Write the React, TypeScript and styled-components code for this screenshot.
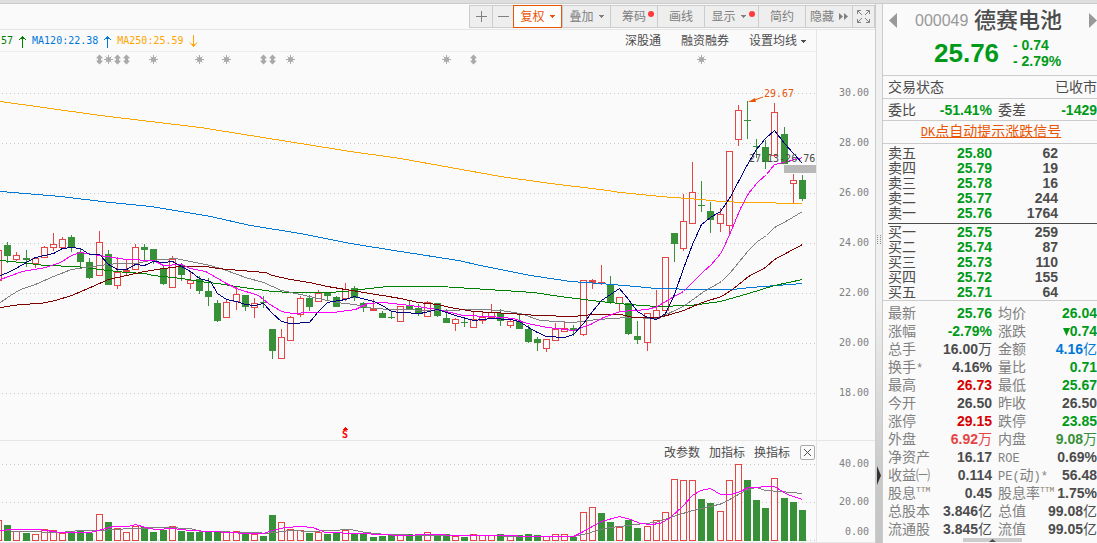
import React from "react";
import styled, { createGlobalStyle } from "styled-components";

const C = {
  up: "#e54545",
  down: "#389038",
  green: "#009a18",
  red: "#d80000",
  orange: "#ea5504",
  blue: "#0078d7",
  text: "#4c4c4c",
  muted: "#808080",
  line: "#cccccc",
  soft: "#e6e6e6",
  bg: "#fafafa",
};

const CJK = '"Liberation Sans", "Noto Sans CJK SC", sans-serif';
const MONO = '"DejaVu Sans Mono", "Noto Sans CJK SC", monospace';

const GlobalStyle = createGlobalStyle`
  *, *::before, *::after { box-sizing: border-box; }
  body { margin: 0; background: ${C.bg}; font-family: ${CJK}; color: ${C.text}; }
  button { font: inherit; color: inherit; background: none; border: 0; padding: 0; cursor: pointer; }
  table { border-spacing: 0; }
  th { font-weight: 400; text-align: left; padding: 0; }
  td { padding: 0; }
  svg { display: block; }
`;

/* ---------- page ---------- */

const Page = styled.div`
  display: flex;
  min-height: 100vh;
  border-top: 3px solid #dedede;
  overflow: hidden;
`;

const ChartArea = styled.main`
  flex: 1;
  min-width: 0;
  display: flex;
  flex-direction: column;
  border-top: 1px solid ${C.line};
  border-right: 1px solid ${C.line};
`;

const Gutter = styled.div`
  width: 6px;
  flex: none;
  display: flex;
  flex-direction: column;
  justify-content: space-between;
  padding: 231px 0 58px;
  border-top: 1px solid ${C.line};
  background: linear-gradient(#f0f0f0 55%, #c9c9c9 88%, #c4c4c4);
`;

const Panel = styled.aside`
  width: 215px;
  flex: none;
  display: flex;
  flex-direction: column;
  border-top: 1px solid ${C.line};
  border-left: 1px solid ${C.line};
`;

/* ---------- toolbar ---------- */

const Toolbar = styled.div`
  display: flex;
  justify-content: flex-end;
  height: 26px;
  padding-top: 1px;
  border-bottom: 1px solid ${C.soft};
`;

const ToolButton = styled.button<{ $width: number; $active?: boolean; $badge?: boolean }>`
  position: relative;
  display: flex;
  align-items: center;
  justify-content: center;
  gap: 5px;
  width: ${(p) => p.$width}px;
  height: 23px;
  padding-right: ${(p) => (p.$badge ? 6 : 0)}px;
  font-size: 12px;
  line-height: 20px;
  color: ${(p) => (p.$active ? C.orange : C.muted)};
  background: ${(p) => (p.$active ? "#ffffff" : "#eeeeee")};
  border: 1px solid ${(p) => (p.$active ? C.orange : C.line)};
  border-right-width: ${(p) => (p.$active ? 1 : 0)}px;
  white-space: nowrap;

  &:last-child { border-right-width: 1px; }
`;

const Dot = styled.span`
  position: absolute;
  top: 5px;
  right: 3px;
  width: 6px;
  height: 6px;
  border-radius: 50%;
  background: #ff3b3b;
`;

const Caret = () => (
  <svg width="5" height="3" viewBox="0 0 5 3" shapeRendering="crispEdges" aria-hidden="true">
    <path d="M0 0h5v1h-1v1h-1v1h-1v-1h-1v-1h-1z" fill="currentColor" />
  </svg>
);

/* ---------- panes ---------- */

const Pane = styled.section`
  display: flex;
  border-bottom: 1px solid ${C.soft};
`;

const Plot = styled.div`
  flex: 1;
  min-width: 0;
  overflow: hidden;
  display: flex;
  flex-direction: column;
  align-items: flex-end;
`;

const Axis = styled.ol`
  list-style: none;
  margin: 0;
  width: 59px;
  flex: none;
  display: flex;
  flex-direction: column;
  border-left: 1px solid ${C.soft};
  font: 10px/12px ${MONO};
  color: ${C.muted};
  padding: 0 6px 0 0;
`;

const Tick = styled.li<{ $height: number }>`
  height: ${(p) => p.$height}px;
  display: flex;
  align-items: center;
  justify-content: flex-end;
`;

const PriceAxis = styled(Axis)`
  padding-top: 38px;
`;

const VolumeAxis = styled(Axis)`
  padding-top: 4px;
`;

const InfoBar = styled.div`
  width: 100%;
  height: 22px;
  display: flex;
  align-items: center;
  justify-content: space-between;
  padding: 1px 10px 0 1px;
  border-bottom: 1px solid #eeeeee;
`;

const Averages = styled.div`
  display: flex;
  align-items: center;
  font: 10px/14px ${MONO};
`;

const Average = styled.span<{ $color: string }>`
  display: flex;
  align-items: center;
  gap: 5px;
  margin-right: 5px;
  color: ${(p) => p.$color};
`;

const Links = styled.div<{ $gap: number }>`
  display: flex;
  align-items: center;
  gap: ${(p) => p.$gap}px;
  font-size: 12px;
  line-height: 16px;
`;

const LinkButton = styled.button`
  display: flex;
  align-items: center;
  gap: 4px;
  white-space: nowrap;
`;

const VolumeTools = styled.div`
  height: 23px;
  display: flex;
  align-items: center;
  gap: 10px;
  padding-right: 1px;
`;

const CloseButton = styled.button`
  width: 15px;
  height: 15px;
  display: flex;
  align-items: center;
  justify-content: center;
  border: 1px solid #aaaaaa;
  border-radius: 2px;
`;

const Svg = styled.svg`
  flex: none;
  overflow: visible;
  font: 10px ${MONO};
`;

/* ---------- chart data: x, colour, high, top, bottom, low, volume top, volume colour ---------- */

const CANDLES = `
-2 r 250 250 281 281 520 r|7 g 242 245 256 263 525 g|16 r 252 255 260 261 531 r|26 g 250 258 260 267 533 g
35 r 257 258 264 268 534 r|44 r 246 247 258 258 529 r|53 r 233 244 248 251 530 r|62 r 237 239 248 249 533 r
71 g 235 237 248 252 533 g|80 g 249 252 262 267 531 g|89 g 258 262 278 279 533 g|99 r 231 242 276 276 514 r
108 g 250 254 285 285 522 g|117 r 257 272 286 289 528 r|126 r 260 270 273 276 532 r|135 r 244 247 270 270 526 r
144 g 244 247 250 260 527 g|153 g 249 249 261 264 532 g|163 g 266 268 284 285 530 g|172 r 256 259 288 288 526 r
181 g 263 265 275 281 531 g|190 r 271 280 284 289 532 g|199 g 276 279 291 294 532 g|208 g 278 291 297 306 531 g
217 g 300 303 321 322 531 g|226 r 299 302 318 318 532 r|236 r 287 294 302 310 531 r|245 g 295 295 307 311 534 g
254 r 298 303 308 318 534 r|263 g 296 302 303 308 536 g|272 g 329 329 351 359 515 g|281 r 329 337 359 359 522 r
290 r 316 317 341 341 529 r|300 r 296 298 315 317 530 r|309 g 295 298 307 311 533 g|318 r 290 293 302 302 532 r
327 g 292 292 296 300 534 g|336 g 296 297 307 307 533 g|345 r 283 289 299 301 530 r|354 g 286 288 298 301 533 g
363 g 302 303 308 312 534 g|373 r 299 308 311 311 537 g|382 g 311 313 318 318 536 g|391 g 311 317 318 319 534 g
400 r 306 306 322 322 535 r|409 g 301 305 309 309 534 g|418 g 304 308 314 316 534 g|427 r 301 302 317 317 532 r
437 g 303 303 316 317 534 g|446 g 309 318 323 323 534 g|455 r 318 319 324 331 536 r|464 g 318 322 323 327 537 g
473 r 312 319 328 328 534 r|482 r 312 317 321 324 535 r|491 r 304 312 318 318 535 r|500 g 309 313 321 326 534 g
510 r 320 321 326 328 535 r|519 g 315 321 329 329 535 g|528 g 325 329 342 343 534 g|537 g 337 339 343 351 535 g
546 r 339 339 349 352 536 r|555 r 323 329 341 341 534 r|564 r 321 328 332 332 534 r|573 g 325 328 331 336 537 g
583 r 280 280 335 336 512 r|592 r 279 280 283 289 507 r|601 r 265 282 284 285 513 g|610 g 276 285 303 304 522 g
619 r 297 297 304 312 527 r|628 g 303 303 334 335 520 g|637 g 321 336 340 344 528 g|647 r 313 313 343 351 526 r
656 r 290 310 319 319 520 r|665 r 257 257 311 311 512 r|674 g 233 233 244 262 479 r|683 r 194 221 249 251 480 r
692 r 162 192 224 224 480 r|701 g 181 205 206 212 499 g|710 g 202 211 220 233 503 g|720 r 208 214 224 232 511 r
729 r 151 151 226 233 480 r|738 r 105 110 140 146 464 r|747 g 101 120 121 139 480 g|756 g 139 146 147 158 500 g
765 g 140 147 162 169 508 g|774 r 103 112 156 157 478 r|784 g 127 134 164 164 498 g|793 r 174 180 184 203 502 g
802 g 175 180 199 201 510 g`
  .trim()
  .split(/[|\n]/)
  .map((row) => {
    const [x, color, hi, top, bottom, lo, volume, volumeColor] = row.split(" ");
    return { x: +x, color, hi: +hi, top: +top, bottom: +bottom, lo: +lo, volume: +volume, volumeColor };
  });

const PRICE_LINES: [string, string][] = [
  ["#ffa500", "0,101 50,108 100,115 150,121 200,127 250,135 300,143 350,151 400,158 450,167 500,176 550,183 600,189 620,192 660,196 700,199 720,201 747,202 802,203"],
  ["#0078d7", "0,191 60,196 110,202 150,206 210,216 250,225 300,233 350,243 400,251 458,260 480,265 500,269 530,275 570,281 600,283 635,286 656,288 700,289 732,289 750,287 802,283"],
  ["#008000", "0,260 20,262 45,265 75,266 99,269 126,272 144,273 153,275 181,278 199,281 217,283 236,286 250,288 272,291 290,292 327,292 345,291 360,289 387,286 440,286 487,289 533,292 560,296 583,299 600,301 628,304 656,306 690,305 720,301 748,293 774,285 802,279"],
  ["#808080", "0,302 10,295 20,289 35,284 53,276 71,269 85,267 99,265 117,263 135,263 150,260 175,258 190,261 210,265 226,270 245,277 263,282 281,290 300,294 318,298 336,302 354,304 373,308 391,309 437,310 482,309 500,310 520,313 540,320 573,322 597,319 627,317 657,318 670,312 683,306 702,292 721,281 730,272 748,250 757,241 766,235 774,227 787,220 802,211"],
  ["#800000", "0,307 20,304 40,303 55,300 71,295 90,287 108,279 126,275 144,271 163,268 180,266 205,266 217,268 240,270 265,272 272,275 290,279 309,282 327,286 345,289 363,292 382,295 400,298 418,302 437,304 450,307 473,311 491,312 510,313 537,315 573,316 593,314 620,314 633,317 658,317 670,314 683,310 702,302 721,296 732,289 748,276 765,267 774,259 787,252 802,244"],
  ["#ff00ff", "0,279 22,271 45,267 60,262 71,255 80,252 99,255 126,259 153,260 163,265 181,264 190,268 205,271 214,276 226,283 236,288 258,295 268,303 281,311 292,313 310,312 333,312 355,309 367,303 383,302 410,305 437,309 450,312 463,315 490,316 513,318 527,323 547,327 573,330 590,324 603,317 620,311 647,309 657,306 670,298 683,291 702,272 711,264 721,252 730,232 740,208 748,193 757,182 766,174 774,164 783,162 802,157"],
  ["#000080", "0,275 10,271 26,262 35,257 53,253 62,248 71,247 80,248 89,254 99,254 108,264 117,269 126,269 135,264 144,265 153,261 163,262 172,261 181,266 190,271 199,278 210,281 217,293 226,299 236,301 245,304 254,305 263,303 272,313 281,321 290,323 309,322 318,311 327,302 345,299 354,296 373,301 382,305 391,311 400,312 420,313 437,309 455,315 473,320 491,318 510,319 519,321 528,327 537,332 546,336 564,337 573,334 583,323 592,311 601,300 610,294 619,288 628,299 637,311 647,317 656,319 665,313 674,294 683,268 692,244 701,224 710,217 720,211 729,198 738,181 747,164 756,149 765,138 774,130 784,143 793,153 802,163"],
];

const VOLUME_LINES: [string, string][] = [
  ["#808080", "0,530 20,531 60,532 80,530 100,530 130,528 165,527 190,528 200,531 258,532 265,533 290,530 310,531 350,529 365,532 385,534 430,535 573,536 587,533 600,529 610,527 620,526 635,524 655,522 673,516 692,510 710,506 722,503 738,494 747,489 756,487 765,490 780,491 802,493"],
  ["#ff00ff", "0,530 12,529 38,529 60,532 90,532 105,528 113,526 128,526 135,524 145,527 155,529 172,528 190,530 210,531 230,532 245,533 263,533 272,530 285,527 300,526 312,527 325,532 360,533 400,535 430,534 460,535 573,536 583,531 592,526 601,521 619,516 630,519 640,523 650,524 660,523 670,517 682,506 692,495 700,490 710,488 720,494 730,494 740,491 748,487 774,486 787,494 802,499"],
];

const STARS = [108, 153, 199, 226, 290, 446, 701];
const DOUBLE_ARROWS = [99, 117, 126, 263, 272, 473];

const fillOf = (c: string) => (c === "r" ? C.up : C.down);

function Body({ x, top, bottom, color }: { x: number; top: number; bottom: number; color: string }) {
  if (color === "g" || bottom - top < 4) {
    return <rect x={x - 3} y={top} width="7" height={bottom - top} fill={fillOf(color)} />;
  }
  return <rect x={x - 2.5} y={top + 0.5} width="6" height={bottom - top - 1} fill={C.bg} stroke={C.up} />;
}

function GridLine({ y }: { y: number }) {
  return <path d={`M-1998 ${y + 0.5}H816`} stroke="#c8c8c8" strokeDasharray="1 3" />;
}

function Lines({ lines }: { lines: [string, string][] }) {
  return (
    <g fill="none" transform="translate(0.5 0.5)">
      {lines.map(([color, points]) => (
        <polyline key={color} points={points} stroke={color} />
      ))}
    </g>
  );
}

function PriceChart() {
  return (
    <Svg width="816" height="388" viewBox="0 52 816 388" shapeRendering="crispEdges" role="img" aria-label="K线图">
      {[93, 143, 193, 243, 293, 343, 393].map((y) => (
        <GridLine key={y} y={y} />
      ))}
      {CANDLES.map((c) => (
        <g key={c.x}>
          <rect x={c.x} y={c.hi} width="1" height={c.top - c.hi} fill={fillOf(c.color)} />
          <rect x={c.x} y={c.bottom} width="1" height={c.lo - c.bottom} fill={fillOf(c.color)} />
          <Body x={c.x} top={c.top} bottom={c.bottom} color={c.color} />
        </g>
      ))}
      <rect x="784" y="165" width="32" height="8" fill="#b8b8b8" />
      <Lines lines={PRICE_LINES} />
      <text x="749" y="162" fill={C.text}>27.13-26.76</text>
      <text x="764" y="97" fill={C.orange}>29.67</text>
      <g stroke={C.orange} fill={C.orange} shapeRendering="auto">
        <path d="M763 97L752 101" />
        <path d="M748 102L755 98L756 102Z" stroke="none" />
      </g>
      <g fill="#aaaaaa" stroke="#aaaaaa" shapeRendering="auto">
        {STARS.map((x) => (
          <g key={x} transform={`translate(${x + 0.5} 59.5)`}>
            <circle r="2.500" stroke="none" />
            <path d="M0 -4.500V4.500M-4.500 0H4.500M-3 -3L3 3M3 -3L-3 3" />
          </g>
        ))}
        {DOUBLE_ARROWS.map((x) => (
          <path key={x} transform={`translate(${x + 0.5} 59.5)`} stroke="none" d="M0 -5L3 -2V-1H1.500V1H3V2L0 5L-3 2V1H-1.500V-1H-3V-2Z" />
        ))}
      </g>
      <path d="M345 427L349 430H342Z" fill="#ff0000" />
      <text x="345" y="438" fill="#ff0000" fontWeight="700" textAnchor="middle">S</text>
    </Svg>
  );
}

function VolumeChart() {
  return (
    <Svg width="816" height="78" viewBox="0 464 816 78" shapeRendering="crispEdges" role="img" aria-label="成交量">
      {[464, 502, 540].map((y) => (
        <GridLine key={y} y={y} />
      ))}
      {CANDLES.map((c) => (
        <Body key={c.x} x={c.x} top={c.volume} bottom={541} color={c.volumeColor} />
      ))}
      <Lines lines={VOLUME_LINES} />
    </Svg>
  );
}

const Arrow = ({ down }: { down?: boolean }) => (
  <svg width="9" height="13" viewBox="0 0 9 13" fill="none" stroke="currentColor" aria-hidden="true">
    {down ? (
      <path d="M4.500 0V12M1 7.500L4.500 11.500L8 7.500M3 9.500H6" />
    ) : (
      <path d="M4.500 13V1M1 5L4.500 1.500L8 5M3 3.500H6" />
    )}
  </svg>
);

/* ---------- quote panel ---------- */

const Head = styled.header`
  height: 72px;
  border-bottom: 1px solid ${C.line};
`;

const NameRow = styled.div`
  display: flex;
  align-items: center;
  height: 33px;
  padding-left: 5px;
`;

const NavButton = styled.button`
  flex: none;
  width: 9px;
  height: 15px;
`;

const Code = styled.span`
  margin-left: 18px;
  width: 59px;
  font-size: 16px;
  line-height: 20px;
  color: #999999;
`;

const Name = styled.h1`
  margin: 0;
  flex: 1;
  font-size: 22px;
  line-height: 32px;
  font-weight: 500;
  white-space: nowrap;
`;

const PriceRow = styled.div`
  display: flex;
  align-items: center;
  padding-left: 51px;
  height: 32px;
  font-weight: 700;
  color: ${C.green};
`;

const Price = styled.strong`
  width: 79px;
  font-size: 26px;
  line-height: 32px;
`;

const Change = styled.div`
  font-size: 14px;
  line-height: 16px;
  white-space: pre;
`;

const StatusRow = styled.div`
  display: flex;
  align-items: center;
  justify-content: space-between;
  height: 23px;
  padding-left: 5px;
  border-bottom: 1px solid ${C.line};
  font-size: 14px;
  line-height: 20px;
`;

const RatioRow = styled(StatusRow)`
  height: 22px;
`;

const Pair = styled.div<{ $grow?: boolean }>`
  display: flex;
  justify-content: space-between;
  width: ${(p) => (p.$grow ? "auto" : "104px")};
  flex: ${(p) => (p.$grow ? "1" : "none")};
  margin-left: ${(p) => (p.$grow ? 6 : 0)}px;
`;

const Num = styled.b<{ $color?: string }>`
  color: ${(p) => p.$color ?? C.text};
`;

const SignalRow = styled(StatusRow)`
  justify-content: center;
  padding: 0 0 0 2px;
`;

const SignalLink = styled.a`
  color: ${C.orange};
  text-decoration: underline;
`;

const Latin = styled.span`
  font-family: "Liberation Mono", monospace;
  font-size: 12px;
`;

const Book = styled.table`
  width: 100%;
  padding: 2px 0 0 5px;
  border-bottom: 1px solid ${C.line};
  font-size: 14px;
  line-height: 15px;
`;

const BookHalf = styled.tbody<{ $first?: boolean }>`
  display: block;
  padding-bottom: ${(p) => (p.$first ? 2 : 0)}px;
  padding-top: ${(p) => (p.$first ? 0 : 1)}px;
  border-bottom: ${(p) => (p.$first ? `1px solid ${C.text}` : "0")};
`;

const BookRow = styled.tr`
  display: grid;
  grid-template-columns: 44px 60px 66px;
  height: 15px;

  td { text-align: right; font-weight: 700; }
  td:nth-child(2) { color: ${C.green}; }
`;

const Quotes = styled.table`
  width: 100%;
  padding: 3px 0 0 5px;
  font-size: 14px;
  line-height: 18px;

  tbody { display: block; }
`;

const QuoteRow = styled.tr`
  display: grid;
  grid-template-columns: 44px 60px max-content 1fr;
  height: 18px;
  white-space: nowrap;

  th { color: ${C.muted}; }
  th:nth-child(3) { margin-left: 6px; }
`;

const QuoteValue = styled.td<{ $color?: string }>`
  text-align: right;
  font-weight: 700;
  color: ${(p) => p.$color ?? C.text};
`;

const Unit = styled.span`
  font-weight: 400;
`;

const Sup = styled.sup`
  font: 8px/8px "Liberation Mono", monospace;
  color: #8c8070;
  vertical-align: 6px;
`;

const InlineMark = styled.svg`
  display: inline;
`;

const BottomTab = styled.button`
  align-self: flex-start;
  margin-left: 80px;
  width: 59px;
  height: 4px;
  display: flex;
  justify-content: center;
  background: #cccccc;
`;

const SELLS = [["卖五", "25.80", "62"], ["卖四", "25.79", "19"], ["卖三", "25.78", "16"], ["卖二", "25.77", "244"], ["卖一", "25.76", "1764"]];
const BUYS = [["买一", "25.75", "259"], ["买二", "25.74", "87"], ["买三", "25.73", "110"], ["买四", "25.72", "155"], ["买五", "25.71", "64"]];

type Quote = [React.ReactNode, string, string | undefined];
const QUOTES: [Quote, Quote][] = [
  [["最新", "25.76", C.green], ["均价", "26.04", C.green]],
  [["涨幅", "-2.79%", C.green], ["涨跌", "▼0.74", C.green]],
  [["总手", "16.00万", undefined], ["金额", "4.16亿", C.blue]],
  [[<>换手<Latin>*</Latin></>, "4.16%", undefined], ["量比", "0.71", C.green]],
  [["最高", "26.73", C.red], ["最低", "25.67", C.green]],
  [["今开", "26.50", undefined], ["昨收", "26.50", undefined]],
  [["涨停", "29.15", C.red], ["跌停", "23.85", C.green]],
  [["外盘", "6.92万", C.up], ["内盘", "9.08万", C.down]],
  [["净资产", "16.17", undefined], [<Latin>ROE</Latin>, "0.69%", undefined]],
  [["收益㈠", "0.114", undefined], [<><Latin>PE(</Latin>动<Latin>)*</Latin></>, "56.48", undefined]],
  [[<>股息<Sup>TTM</Sup></>, "0.45", undefined], [<>股息率<Sup>TTM</Sup></>, "1.75%", undefined]],
  [["总股本", "3.846亿", undefined], ["总值", "99.08亿", undefined]],
  [["流通股", "3.845亿", undefined], ["流值", "99.05亿", undefined]],
];

function Value({ text }: { text: string }) {
  if (text.startsWith("▼")) {
    return (
      <>
        <InlineMark width="7" height="8" viewBox="0 0 7 8" aria-label="下跌">
          <path d="M0 0H7L3.500 8Z" fill="currentColor" />
        </InlineMark>
        {text.slice(1)}
      </>
    );
  }
  const unit = /[万亿]$/.test(text) ? text.slice(-1) : "";
  return (
    <>
      {unit ? text.slice(0, -1) : text}
      {unit && <Unit>{unit}</Unit>}
    </>
  );
}

function QuotePanel() {
  return (
    <Panel>
      <Head>
        <NameRow>
          <NavButton aria-label="上一只">
            <svg width="9" height="15" viewBox="0 0 9 15"><path d="M9 0V15L1 7.500Z" fill="#999999" /></svg>
          </NavButton>
          <Code>000049</Code>
          <Name>德赛电池</Name>
          <NavButton aria-label="下一只">
            <svg width="9" height="15" viewBox="0 0 9 15"><path d="M1 0V15L9 7.500Z" fill="#999999" /></svg>
          </NavButton>
        </NameRow>
        <PriceRow>
          <Price>25.76</Price>
          <Change>{"- 0.74\n- 2.79%"}</Change>
        </PriceRow>
      </Head>
      <StatusRow>
        <span>交易状态</span>
        <span>已收市</span>
      </StatusRow>
      <RatioRow>
        <Pair><span>委比</span><Num $color={C.green}>-51.41%</Num></Pair>
        <Pair $grow><span>委差</span><Num $color={C.green}>-1429</Num></Pair>
      </RatioRow>
      <SignalRow>
        <SignalLink href="#dk"><Latin>DK</Latin>点自动提示涨跌信号</SignalLink>
      </SignalRow>
      <Book>
        {[SELLS, BUYS].map((rows, i) => (
          <BookHalf key={i} $first={i === 0}>
            {rows.map(([label, price, size]) => (
              <BookRow key={label}>
                <th scope="row">{label}</th>
                <td>{price}</td>
                <td>{size}</td>
              </BookRow>
            ))}
          </BookHalf>
        ))}
      </Book>
      <Quotes>
        <tbody>
          {QUOTES.map(([a, b], i) => (
            <QuoteRow key={i}>
              <th scope="row">{a[0]}</th>
              <QuoteValue $color={a[2]}><Value text={a[1]} /></QuoteValue>
              <th scope="row">{b[0]}</th>
              <QuoteValue $color={b[2]}><Value text={b[1]} /></QuoteValue>
            </QuoteRow>
          ))}
        </tbody>
      </Quotes>
      <BottomTab aria-label="展开">
        <svg width="7" height="4" viewBox="0 0 7 4"><path d="M0 4L3.500 1L7 4Z" fill={C.text} /></svg>
      </BottomTab>
    </Panel>
  );
}

export default function App() {
  return (
    <Page>
      <GlobalStyle />
      <ChartArea>
        <Toolbar>
          <ToolButton $width={23} aria-label="放大">
            <svg width="11" height="11" viewBox="0 0 11 11" stroke="currentColor"><path d="M0 5.500H11M5.500 0V11" /></svg>
          </ToolButton>
          <ToolButton $width={21} aria-label="缩小">
            <svg width="11" height="11" viewBox="0 0 11 11" stroke="currentColor"><path d="M0 5.500H11" /></svg>
          </ToolButton>
          <ToolButton $width={49} $active>复权<Caret /></ToolButton>
          <ToolButton $width={48}>叠加<Caret /></ToolButton>
          <ToolButton $width={47}>筹码<Dot /></ToolButton>
          <ToolButton $width={47}>画线</ToolButton>
          <ToolButton $width={54} $badge>显示<Caret /><Dot /></ToolButton>
          <ToolButton $width={47}>简约</ToolButton>
          <ToolButton $width={47}>
            隐藏
            <svg width="9" height="7" viewBox="0 0 9 7" fill="currentColor" aria-hidden="true"><path d="M0 0L4 3.500L0 7ZM5 0L9 3.500L5 7Z" /></svg>
          </ToolButton>
          <ToolButton $width={23} aria-label="全屏">
            <svg width="13" height="13" viewBox="0 0 13 13" fill="none" stroke="currentColor">
              <path d="M0.500 4V0.500H4M0.500 0.500L5 5M9 0.500H12.500V4M12.500 0.500L8 5M0.500 9V12.500H4M0.500 12.500L5 8M9 12.500H12.500V9M12.500 12.500L8 8" />
            </svg>
          </ToolButton>
        </Toolbar>
        <Pane>
          <Plot>
            <InfoBar>
              <Averages>
                <Average $color="#008000">57<Arrow /></Average>
                <Average $color={C.blue}>MA120:22.38<Arrow /></Average>
                <Average $color="#ffa500">MA250:25.59<Arrow down /></Average>
              </Averages>
              <Links $gap={20}>
                <LinkButton>深股通</LinkButton>
                <LinkButton>融资融券</LinkButton>
                <LinkButton>设置均线<Caret /></LinkButton>
              </Links>
            </InfoBar>
            <PriceChart />
          </Plot>
          <PriceAxis>
            {["30.00", "28.00", "26.00", "24.00", "22.00", "20.00", "18.00"].map((t) => (
              <Tick key={t} $height={50}>{t}</Tick>
            ))}
          </PriceAxis>
        </Pane>
        <Pane>
          <Plot>
            <VolumeTools>
              <Links $gap={9}>
                <LinkButton>改参数</LinkButton>
                <LinkButton>加指标</LinkButton>
                <LinkButton>换指标</LinkButton>
              </Links>
              <CloseButton aria-label="关闭">
                <svg width="9" height="9" viewBox="0 0 9 9" stroke={C.text}><path d="M1 1L8 8M8 1L1 8" /></svg>
              </CloseButton>
            </VolumeTools>
            <VolumeChart />
          </Plot>
          <VolumeAxis>
            <Tick $height={38}>40.00</Tick>
            <Tick $height={38}>20.00</Tick>
            <Tick $height={21}>0.00</Tick>
          </VolumeAxis>
        </Pane>
      </ChartArea>
      <Gutter>
        <svg width="6" height="9" viewBox="0 0 6 9" fill="#888888" shapeRendering="crispEdges">
          <path d="M1 0h1v1h-1zM4 0h1v1h-1zM1 2h1v1h-1zM4 2h1v1h-1zM1 4h1v1h-1zM4 4h1v1h-1zM1 6h1v1h-1zM4 6h1v1h-1zM1 8h1v1h-1zM4 8h1v1h-1z" />
        </svg>
        <svg width="6" height="19" viewBox="0 0 6 19"><path d="M1 0L5 9.500L1 19Z" fill="#333333" /></svg>
      </Gutter>
      <QuotePanel />
    </Page>
  );
}
